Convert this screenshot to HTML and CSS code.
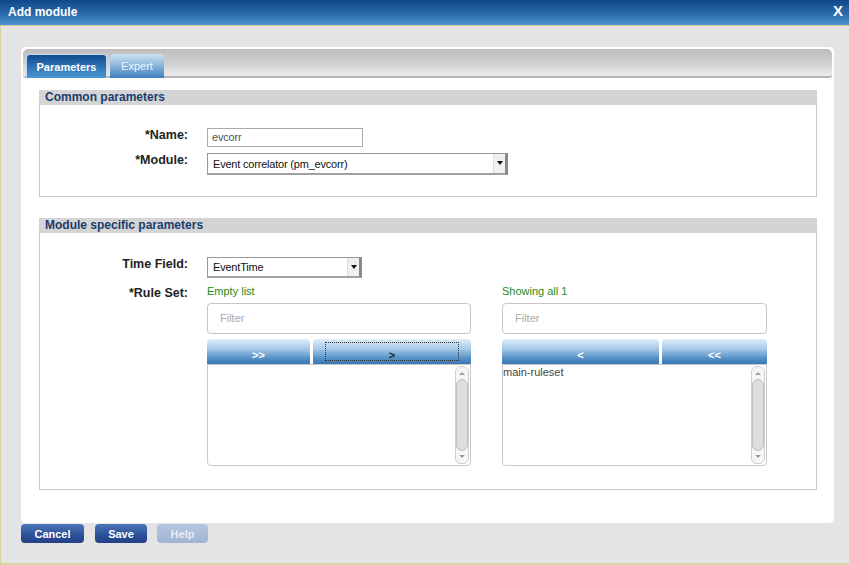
FILE: index.html
```html
<!DOCTYPE html>
<html>
<head>
<meta charset="utf-8">
<link rel="stylesheet" href="styles.css">
</head>
<body>
<div class="dialog">
  <div class="titlebar">
    <span class="title">Add module</span>
    <span class="close">X</span>
  </div>
  <div class="content">
    <div class="panel">
      <div class="tabbar">
        <div class="tab active">Parameters</div>
        <div class="tab">Expert</div>
      </div>

      <div class="section sec1">
        <div class="sec-head">Common parameters</div>
        <div class="sec-body form">
          <label class="lbl">*Name:</label>
          <div class="field"><div class="textin">evcorr</div></div>
          <label class="lbl">*Module:</label>
          <div class="field"><div class="select wide"><span class="val">Event correlator (pm_evcorr)</span><span class="arrow"></span></div></div>
        </div>
      </div>

      <div class="section sec2">
        <div class="sec-head">Module specific parameters</div>
        <div class="sec-body form form2">
          <label class="lbl">Time Field:</label>
          <div class="field"><div class="select narrow"><span class="val">EventTime</span><span class="arrow"></span></div></div>
          <label class="lbl lbl-rule">*Rule Set:</label>
          <div class="field">
            <div class="dual">
              <div class="col">
                <div class="status">Empty list</div>
                <div class="filter">Filter</div>
                <div class="btns">
                  <div class="mv mv-a">&gt;&gt;</div>
                  <div class="mv mv-b"><span class="focus">&gt;</span></div>
                </div>
                <div class="list">
                  <div class="items"></div>
                  <div class="sbar"><div class="up"></div><div class="thumb"></div><div class="down"></div></div>
                </div>
              </div>
              <div class="col">
                <div class="status">Showing all 1</div>
                <div class="filter">Filter</div>
                <div class="btns">
                  <div class="mv mv-c">&lt;</div>
                  <div class="mv mv-d">&lt;&lt;</div>
                </div>
                <div class="list">
                  <div class="items"><div class="item">main-ruleset</div></div>
                  <div class="sbar"><div class="up"></div><div class="thumb"></div><div class="down"></div></div>
                </div>
              </div>
            </div>
          </div>
        </div>
      </div>
    </div>
    <div class="actions">
      <div class="abtn cancel">Cancel</div>
      <div class="abtn save">Save</div>
      <div class="abtn help">Help</div>
    </div>
  </div>
</div>
</body>
</html>
```

FILE: styles.css
```css
* { box-sizing: border-box; }
html, body { margin: 0; padding: 0; }
body {
  font-family: "Liberation Sans", Arial, sans-serif;
  font-size: 11px;
  color: #222;
  background: #e4e4e4;
}
.dialog {
  width: 849px;
  height: 565px;
  display: flex;
  flex-direction: column;
  background: #e4e4e4;
  border-left: 1px solid #d9cf9f;
  border-bottom: 2px solid #ddd3a3;
}
.titlebar {
  height: 26px;
  flex: none;
  display: flex;
  align-items: center;
  justify-content: space-between;
  padding: 0 6px 2px 8px;
  margin-left: -1px;
  background: linear-gradient(#10488a, #2e6eae 60%, #4d93cf);
  border-bottom: 1px solid #d6cb98;
  color: #fff;
  font-weight: bold;
  font-size: 12px;
}
.close {
  font-size: 15px;
  font-weight: bold;
  margin-top: -2px;
}
.content {
  flex: 1;
  padding: 21px 15px 0 20px;
}
.panel {
  height: 476px;
  background: #fff;
  border-radius: 5px;
  padding: 2px 2px 0 2px;
}
.tabbar {
  height: 29px;
  border-radius: 5px 5px 3px 3px;
  background: linear-gradient(#bdbdbd, #cfcfcf 50%, #ececec);
  border-bottom: 2px solid #b3b3b3;
  display: flex;
  align-items: flex-end;
  padding-left: 3px;
  gap: 3px;
}
.tab {
  height: 24px;
  border-radius: 4px 4px 0 0;
  display: flex;
  align-items: center;
  justify-content: center;
  font-size: 11px;
  margin-bottom: -2px;
}
.tab.active {
  width: 81px;
  background: linear-gradient(#114c8e, #3479bb 60%, #4d97d2);
  color: #fff;
  font-weight: bold;
  border: 1px solid #c4d6ea;
  border-bottom: none;
}
.tab:not(.active) {
  width: 54px;
  background: linear-gradient(#cde2f4, #88b3da 50%, #3f7ec0);
  color: #f0f4f8;
  font-size: 11px;
}
.section {
  margin: 0 15px 0 16px;
  border: 1px solid #c8c8c8;
  border-top: none;
}
.sec1 { margin-top: 12px; height: 107px; }
.sec2 { margin-top: 21px; height: 272px; }
.sec-head {
  height: 15px;
  background: #d4d4d4;
  color: #1a3d6d;
  font-weight: bold;
  font-size: 12px;
  line-height: 14px;
  padding-left: 6px;
  margin: 0 -1px;
}
.form {
  display: grid;
  grid-template-columns: 148px 1fr;
  column-gap: 19px;
  align-items: start;
}
.sec1 .sec-body { padding-top: 23px; row-gap: 6px; }
.sec2 .sec-body { padding-top: 24px; row-gap: 7px; }
.lbl {
  text-align: right;
  font-weight: bold;
  font-size: 12.5px;
  color: #222;
  padding-top: 0;
}
.lbl-rule { padding-top: 1px; }
.textin {
  width: 156px;
  height: 19px;
  border: 1px solid #aaa;
  color: #555;
  font-size: 11px;
  line-height: 17px;
  padding-left: 4px;
  letter-spacing: -0.2px;
}
.select {
  height: 22px;
  border: 1px solid #999;
  border-right: 3px solid #8a8a8a;
  border-bottom: 2px solid #a0a0a0;
  display: flex;
  align-items: center;
  justify-content: space-between;
  color: #111;
  font-size: 11px;
  background: #fff;
}
.select .val { padding-left: 5px; letter-spacing: -0.2px; }
.select.wide { width: 301px; }
.select.narrow { width: 155px; height: 21px; }
.arrow {
  width: 12px;
  height: 100%;
  background: #f0f0f0;
  border-left: 1px solid #ddd;
  position: relative;
}
.arrow::after {
  content: "";
  position: absolute;
  left: 3px;
  top: 7px;
  border-left: 3px solid transparent;
  border-right: 3px solid transparent;
  border-top: 4px solid #111;
}
.dual {
  display: flex;
  gap: 31px;
  margin-top: 0;
}
.col { width: 265px; }
.col:first-child { width: 264px; }
.status {
  color: #1b8a1b;
  font-size: 11px;
  height: 12px;
  line-height: 12px;
}
.filter {
  margin-top: 6px;
  height: 31px;
  border: 1px solid #c6c6c6;
  border-radius: 4px;
  color: #aaa;
  font-size: 11px;
  line-height: 29px;
  padding-left: 12px;
}
.btns {
  margin-top: 5px;
  display: flex;
  gap: 3px;
  height: 25px;
}
.mv {
  background: linear-gradient(#deeefb, #a5c8e6 40%, #5893c8 75%, #3a76b3);
  border-radius: 4px 4px 0 0;
  color: #fff;
  font-weight: bold;
  font-size: 11px;
  display: flex;
  align-items: flex-end;
  justify-content: center;
  padding-bottom: 3px;
}
.mv-a { width: 103px; }
.mv-b { flex: 1; padding: 3px 12px 3px 12px; align-items: stretch; }
.mv-b .focus {
  flex: 1;
  border: 1px dotted #333;
  display: flex;
  align-items: flex-end;
  justify-content: center;
  color: #222;
  line-height: 10px;
}
.mv-c { width: 157px; }
.mv-d { flex: 1; }
.list {
  height: 102px;
  border: 1px solid #c8c8c8;
  border-radius: 0 0 4px 4px;
  display: flex;
}
.items { flex: 1; }
.item {
  color: #444;
  font-size: 11px;
  line-height: 12px;
  margin-top: 1px;
}
.sbar {
  width: 14px;
  margin: 1px 1px 1px 0;
  border: 1px solid #cfcfcf;
  border-radius: 6px;
  background: #f6f6f6;
  display: flex;
  flex-direction: column;
  align-items: center;
}
.up, .down {
  height: 12px;
  width: 100%;
  position: relative;
}
.up::after, .down::after {
  content: "";
  position: absolute;
  left: 3px;
  border-left: 3px solid transparent;
  border-right: 3px solid transparent;
}
.up::after { top: 5px; border-bottom: 3px solid #999; }
.down::after { top: 4px; border-top: 3px solid #999; }
.thumb {
  flex: 1;
  width: 12px;
  background: #dedede;
  border: 1px solid #c2c2c2;
  border-radius: 6px;
}
.actions {
  display: flex;
  padding-top: 1px;
  gap: 11px;
}
.abtn {
  height: 19px;
  border-radius: 4px;
  color: #fff;
  font-weight: bold;
  font-size: 11px;
  display: flex;
  align-items: center;
  justify-content: center;
  background: linear-gradient(#4a76b6, #2c4f97 60%, #243f86);
}
.cancel { width: 63px; }
.save { width: 52px; }
.help {
  width: 51px;
  margin-left: -1px;
  background: linear-gradient(#b4c6df, #a3b4d2);
  color: #e6ecf4;
}
```
